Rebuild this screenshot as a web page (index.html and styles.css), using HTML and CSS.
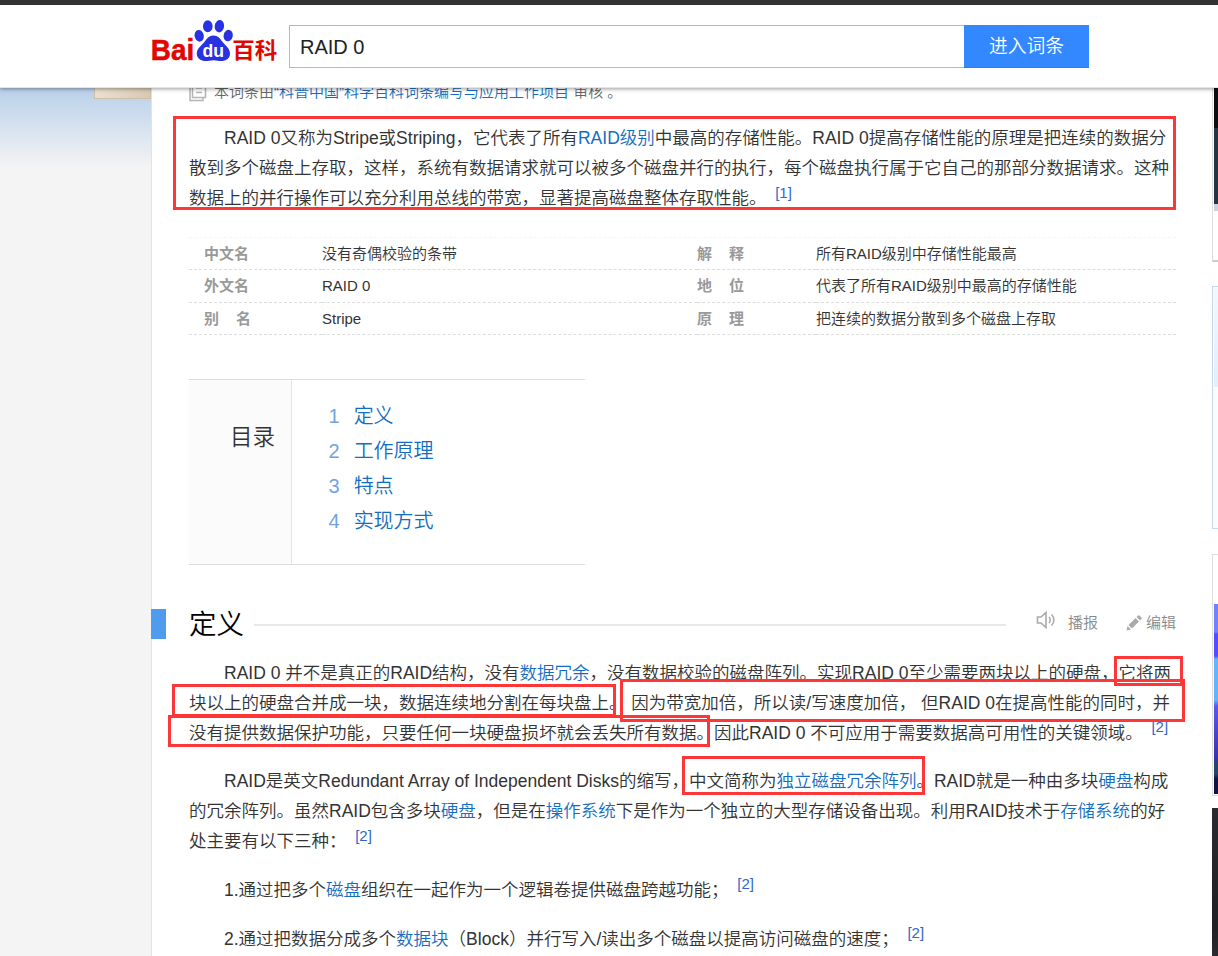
FILE: index.html
```html
<!DOCTYPE html>
<html lang="zh-CN">
<head>
<meta charset="utf-8">
<title>RAID 0_百度百科</title>
<link rel="stylesheet" href="styles.css">
</head>
<body>
<header class="topbar">
  <svg class="logo" width="128" height="56" viewBox="150 13 128 56">
    <text class="logo-red" x="150.800" y="59.500" font-size="29" textLength="43.500" lengthAdjust="spacingAndGlyphs">Bai</text>
    <g fill="#2932e1">
      <ellipse cx="199.200" cy="35.800" rx="4.600" ry="5.900" transform="rotate(-12 199.200 35.800)"/>
      <ellipse cx="207.800" cy="26.200" rx="4.800" ry="6"/>
      <ellipse cx="219.400" cy="26.200" rx="4.700" ry="6.200" transform="rotate(8 219.400 26.200)"/>
      <ellipse cx="228.200" cy="35.600" rx="4.600" ry="5.800" transform="rotate(12 228.200 35.600)"/>
      <path d="M213.500 35.500c5.500 0 7 4 9.500 7 3 3.500 7 6 7 11 0 5.500-4.500 7.500-8.500 7.500-3 0-5-.8-8-.8s-5 .8-8 .8c-4 0-8.700-2-8.700-7.500 0-5 4.200-7.500 7.200-11 2.500-3 4-7 9.500-7z"/>
    </g>
    <text class="logo-du" x="202.500" y="56.500" font-size="18" textLength="21.500" lengthAdjust="spacingAndGlyphs">du</text>
    <text class="logo-cn" x="232.300" y="58" font-size="22" textLength="45" lengthAdjust="spacingAndGlyphs">百科</text>
  </svg>
  <div class="search">
    <div class="search-input">RAID 0</div>
    <div class="search-btn">进入词条</div>
  </div>
</header>

<div class="page">
  <div class="gutter"><div class="badge"></div></div>
  <main class="article">
    <div class="review">
      <svg width="18" height="20" viewBox="0 0 18 20" fill="none" stroke="#b5b5b5" stroke-width="1.500">
        <path d="M3.500 1h13v14.500h-13zM1 4v14.500h13v-3M7 6h6M7 10.500h6"/>
      </svg>
      <span>本词条由<a>“科普中国”科学百科词条编写与应用工作项目</a> 审核 。</span>
    </div>

    <div class="para intro">
      <p class="line first">RAID 0又称为Stripe或Striping，它代表了所有<a>RAID级别</a>中最高的存储性能。RAID 0提高存储性能的原理是把连续的数据分</p>
      <p class="line">散到多个磁盘上存取，这样，系统有数据请求就可以被多个磁盘并行的执行，每个磁盘执行属于它自己的那部分数据请求。这种</p>
      <p class="line">数据上的并行操作可以充分利用总线的带宽，显著提高磁盘整体存取性能。<sup>[1]</sup></p>
    </div>

    <div class="infobox">
      <div class="name">中文名</div><div>没有奇偶校验的条带</div><div class="name two"><span>解</span><span>释</span></div><div>所有RAID级别中存储性能最高</div>
      <div class="name">外文名</div><div>RAID 0</div><div class="name two"><span>地</span><span>位</span></div><div>代表了所有RAID级别中最高的存储性能</div>
      <div class="name two"><span>别</span><span>名</span></div><div>Stripe</div><div class="name two"><span>原</span><span>理</span></div><div>把连续的数据分散到多个磁盘上存取</div>
    </div>

    <nav class="catalog">
      <h2>目录</h2>
      <ol>
        <li><i>1</i><a>定义</a></li>
        <li><i>2</i><a>工作原理</a></li>
        <li><i>3</i><a>特点</a></li>
        <li><i>4</i><a>实现方式</a></li>
      </ol>
    </nav>

    <div class="section-title">
      <span class="mark"></span>
      <h2>定义</h2>
      <span class="rule"></span>
      <span class="tool voice">
        <svg width="20" height="18" viewBox="0 0 20 18" fill="none" stroke="#aaa" stroke-width="1.600">
          <path d="M1.500 6H5l5-4.500v15L5 12H1.500zM13 6c1.500 1.500 1.500 4.500 0 6M15.500 3.500c3.200 3 3.200 8 0 11"/>
        </svg>播报</span>
      <span class="tool edit">
        <svg width="16" height="16" viewBox="0 0 16 16" fill="#aaa">
          <path d="M.5 15.500l1-4.500 3.500 3.500zM2.500 10L9.500 3l3.500 3.500-7 7zM10.500 2l1.500-1.500q.7-.6 1.400 0l2 2q.7.700 0 1.400L14 5.500z"/>
        </svg>编辑</span>
    </div>

    <div class="para">
      <p class="line first">RAID 0 并不是真正的RAID结构，没有<a>数据冗余</a>，没有数据校验的磁盘阵列。实现RAID 0至少需要两块以上的硬盘，它将两</p>
      <p class="line">块以上的硬盘合并成一块，数据连续地分割在每块盘上。 因为带宽加倍，所以读/写速度加倍， 但RAID 0在提高性能的同时，并</p>
      <p class="line">没有提供数据保护功能，只要任何一块硬盘损坏就会丢失所有数据。因此RAID 0 不可应用于需要数据高可用性的关键领域。<sup>[2]</sup></p>
    </div>
    <div class="para">
      <p class="line first">RAID是英文Redundant Array of Independent Disks的缩写，中文简称为<a>独立磁盘冗余阵列</a>。RAID就是一种由多块<a>硬盘</a>构成</p>
      <p class="line">的冗余阵列。虽然RAID包含多块<a>硬盘</a>，但是在<a>操作系统</a>下是作为一个独立的大型存储设备出现。利用RAID技术于<a>存储系统</a>的好</p>
      <p class="line">处主要有以下三种：<sup>[2]</sup></p>
    </div>
    <div class="para"><p class="line first">1.通过把多个<a>磁盘</a>组织在一起作为一个逻辑卷提供磁盘跨越功能；<sup>[2]</sup></p></div>
    <div class="para"><p class="line first">2.通过把数据分成多个<a>数据块</a>（Block）并行写入/读出多个磁盘以提高访问磁盘的速度；<sup>[2]</sup></p></div>
  </main>
  <aside class="side">
    <div class="card photo"><div class="img"></div></div>
    <div class="card blue"><div class="img"></div></div>
    <div class="card purple"><div class="img"></div></div>
    <div class="card dark"></div>
  </aside>
</div>

<div class="hl hl1"></div>
<div class="hl hl2"></div>
<div class="hl hl3"></div>
<div class="hl hl4"></div>
<div class="hl hl5"></div>
<div class="hl hl6"></div>
</body>
</html>
```

FILE: styles.css
```css
* { box-sizing: border-box; margin: 0; padding: 0; }
body {
  position: relative;
  width: 1218px;
  height: 956px;
  overflow: hidden;
  background: #fff;
  color: #333;
  font-family: "Liberation Sans", "Noto Sans CJK SC", sans-serif;
  font-weight: 350;
  text-spacing-trim: space-all;
}
a { color: #136ec2; }

.topbar {
  position: relative;
  z-index: 2;
  display: flex;
  height: 88px;
  padding: 8px 0 0 150px;
  border-top: 5px solid #333;
  border-bottom: 1px solid #e3e3e3;
  background: #fff;
  box-shadow: 0 1px 4px rgba(0, 0, 0, .4);
}
.logo { overflow: visible; }
.logo-red { font-family: "Liberation Sans", sans-serif; font-weight: 700; fill: #e10602; stroke: #e10602; stroke-width: .5px; }
.logo-du { font-family: "Liberation Sans", sans-serif; font-weight: 700; fill: #fff; }
.logo-cn { font-family: "Noto Sans CJK SC", sans-serif; font-weight: 700; fill: #e10602; }
.search { display: flex; margin: 12px 0 0 11px; height: 43px; }
.search-input {
  width: 675px;
  padding-left: 10px;
  border: 1px solid #b8b8b8;
  border-right: 0;
  font-size: 20px;
  line-height: 42px;
  color: #222;
}
.search-btn {
  width: 125px;
  background: #38f;
  border-bottom: 1px solid #2c7df0;
  color: #fff;
  font-size: 18.75px;
  line-height: 43px;
  text-align: center;
}

.page { display: flex; height: 868px; }
.gutter {
  flex: 0 0 152px;
  border-right: 1px solid #e3e3e3;
  background: linear-gradient(#b9cfe9 0, #c6d8ec 18px, #f4f4f4 80px);
}
.badge {
  width: 57px;
  height: 11px;
  margin-left: 94px;
  background: linear-gradient(90deg, #ebdfcf, #d8c9b2);
  border: 1px solid #cdbfaa;
  border-top: 0;
}
.article { flex: 0 0 1024px; min-width: 0; padding-left: 37px; margin-top: -10px; }
.side { flex: 0 0 6px; margin-left: 36px; }

.review {
  display: flex;
  align-items: center;
  height: 24px;
  font-size: 15px;
  color: #666;
  white-space: pre;
}
.review svg { margin: 4px 7px 0 0; }
.para { font-size: 17.5px; line-height: 30px; margin-bottom: 18.7px; }
.intro { margin: 21px 0 24px; }
.line { height: 30px; white-space: pre; }
.first { padding-left: 35px; }
sup { margin-left: 8.7px; font-size: 15px; line-height: 0; color: #36c; vertical-align: 6.5px; }

.infobox {
  display: grid;
  grid-template-columns: 133px 375px 119px 1fr;
  grid-auto-rows: 32.3px;
  height: 98px;
  border-top: 1px dashed #f5f5f5;
  font-size: 15px;
  line-height: 31px;
}
.infobox > div { border-bottom: 1px dashed #ddd; }
.infobox .name { color: #999; font-weight: 700; }
.infobox > div:nth-child(4n+1) { padding-left: 15px; }
.two { display: flex; gap: 17px; }
.infobox, .section-title { width: 987px; }

.catalog {
  display: flex;
  width: 396px;
  height: 186px;
  margin-top: 44px;
  border: solid #ddd;
  border-width: 1px 0;
}
.catalog h2 {
  width: 103px;
  padding: 41px 0 0 41px;
  border-right: 1px solid #e6e6e6;
  background: #fbfbfb;
  font-size: 22.5px;
  line-height: 34px;
  font-weight: 350;
}
.catalog ol { padding: 19px 0 0 36.5px; list-style: none; font-size: 20px; line-height: 35px; }
.catalog li { display: flex; gap: 14px; }
.catalog i { font-style: normal; color: #71a3e3; }

.section-title { display: flex; align-items: center; width: 1025px; height: 40px; margin: 40px 0 12.5px -38px; white-space: nowrap; }
.section-title > * { flex-shrink: 0; }
.mark { width: 15px; height: 30px; margin: -2px 23px 0 0; background: #4f9cee; }
.section-title h2 { width: 55px; color: #000; font-size: 27.5px; line-height: 44px; font-weight: 350; }
.rule { width: 752px; height: 2px; margin-left: 10px; background: #e8e8e8; }
.tool { display: flex; align-items: center; height: 22px; margin-top: -8px; color: #888; font-size: 15px; }
.voice { margin-left: 30px; }
.voice svg { margin: -3px 12px 0 0; }
.edit { margin-left: 28px; }
.edit svg { margin: 3px 4px 0 0; }

.card { border: 1px solid #ddd; border-right: 0; }
.photo { height: 174px; border-top: 0; border-bottom: 2px solid #ccc; padding-left: 1px; }
.photo .img { height: 123px; background: linear-gradient(#0c0d11 0 40px, #263340 40px 116px, #ccd3df 116px); }
.blue { height: 243px; margin-top: 24px; border-color: #c3d9ed; padding: 1px 0 0 1px; background: #fbfcff; }
.blue .img { height: 99px; background: linear-gradient(#f2f8ff, #e2eefb); }
.purple { height: 242px; margin-top: 25px; padding: 49px 0 0 1px; }
.purple .img {
  height: 190px;
  background: linear-gradient(#7182fb 0 28px, #554bff 30px 52px, #65b4fa 55px 96px, #5d58f0 102px, #3932a8 155px, #244568 160px 170px, #101442 175px);
}
.dark { height: 148px; margin-top: 12px; border: 0; background: linear-gradient(#292b30, #202124 80%, #2b2b2f); }

.hl { position: absolute; z-index: 3; border: 3px solid #fd3737; }
.hl1 { left: 173px; top: 116px; width: 1003px; height: 94px; }
.hl2 { left: 1114px; top: 656px; width: 69px; height: 30px; }
.hl3 { left: 620px; top: 679px; width: 565px; height: 43px; }
.hl4 { left: 172px; top: 684px; width: 444px; height: 33px; }
.hl5 { left: 168px; top: 715px; width: 542px; height: 32px; }
.hl6 { left: 682px; top: 756px; width: 243px; height: 39px; }
```
